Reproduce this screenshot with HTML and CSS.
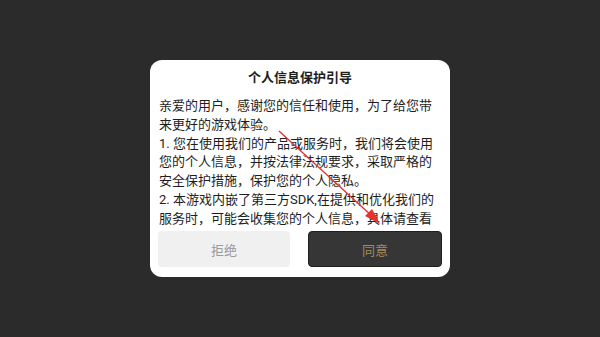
FILE: index.html
```html
<!DOCTYPE html>
<html lang="zh-CN">
<head>
  <meta charset="UTF-8">
  <meta name="viewport" content="width=device-width, initial-scale=1.0">
  <title>个人信息保护引导</title>
  <link rel="stylesheet" href="styles.css">
</head>
<body>
  <div class="dialog">
    <div class="dialog-title">个人信息保护引导</div>
    <div class="dialog-body">
      <p>亲爱的用户，感谢您的信任和使用，为了给您带来更好的游戏体验。</p>
      <p>1. 您在使用我们的产品或服务时，我们将会使用您的个人信息，并按法律法规要求，采取严格的安全保护措施，保护您的个人隐私。</p>
      <p>2. 本游戏内嵌了第三方SDK,在提供和优化我们的服务时，可能会收集您的个人信息，具体请查看</p>
    </div>
    <div class="dialog-buttons">
      <button class="btn btn-refuse">拒绝</button>
      <button class="btn btn-agree">同意</button>
    </div>

    <!-- red annotation arrow -->
    <svg class="mark" width="300" height="217" viewBox="0 0 300 217">
      <line x1="129" y1="71" x2="223" y2="157" stroke="#e8322c" stroke-width="1.4"/>
      <polygon points="230,164 215,156 222,149" fill="#e8322c"/>
    </svg>
  </div>
</body>
</html>
```

FILE: styles.css
```css
body {
  margin: 0;
  height: 100vh;
  display: flex;
  align-items: center;
  justify-content: center;
  background: #2b2b2b;
  font-family: Roboto, "Noto Sans CJK SC", sans-serif;
}

.dialog {
  position: relative;
  width: 300px;
  height: 217px;
  box-sizing: border-box;
  padding: 8px 8px 10px;
  background: #fff;
  border-radius: 12px;
  display: flex;
  flex-direction: column;
}

.dialog-title {
  height: 20px;
  line-height: 20px;
  text-align: center;
  font-size: 13px;
  font-weight: bold;
  color: #1e1e1e;
}

.dialog-body {
  margin-top: 9px;
  height: 130px;
  overflow: hidden;
  padding: 0 2px 0 1px;
  font-size: 13px;
  line-height: 18.8px;
  color: #1e1e1e;
}

.dialog-body p {
  margin: 0;
}

.dialog-buttons {
  margin-top: 4px;
  display: flex;
  gap: 18px;
}

.btn {
  flex: 1;
  height: 36px;
  border-radius: 4px;
  font-family: inherit;
  font-size: 13px;
  cursor: pointer;
}

.btn-refuse {
  background: #f0f0f0;
  border: none;
  color: #9a9a9a;
}

.btn-agree {
  background: #363636;
  border: 1px solid #1f1f1f;
  color: #a38c5c;
}

.mark {
  position: absolute;
  left: 0;
  top: 0;
  pointer-events: none;
}
```
